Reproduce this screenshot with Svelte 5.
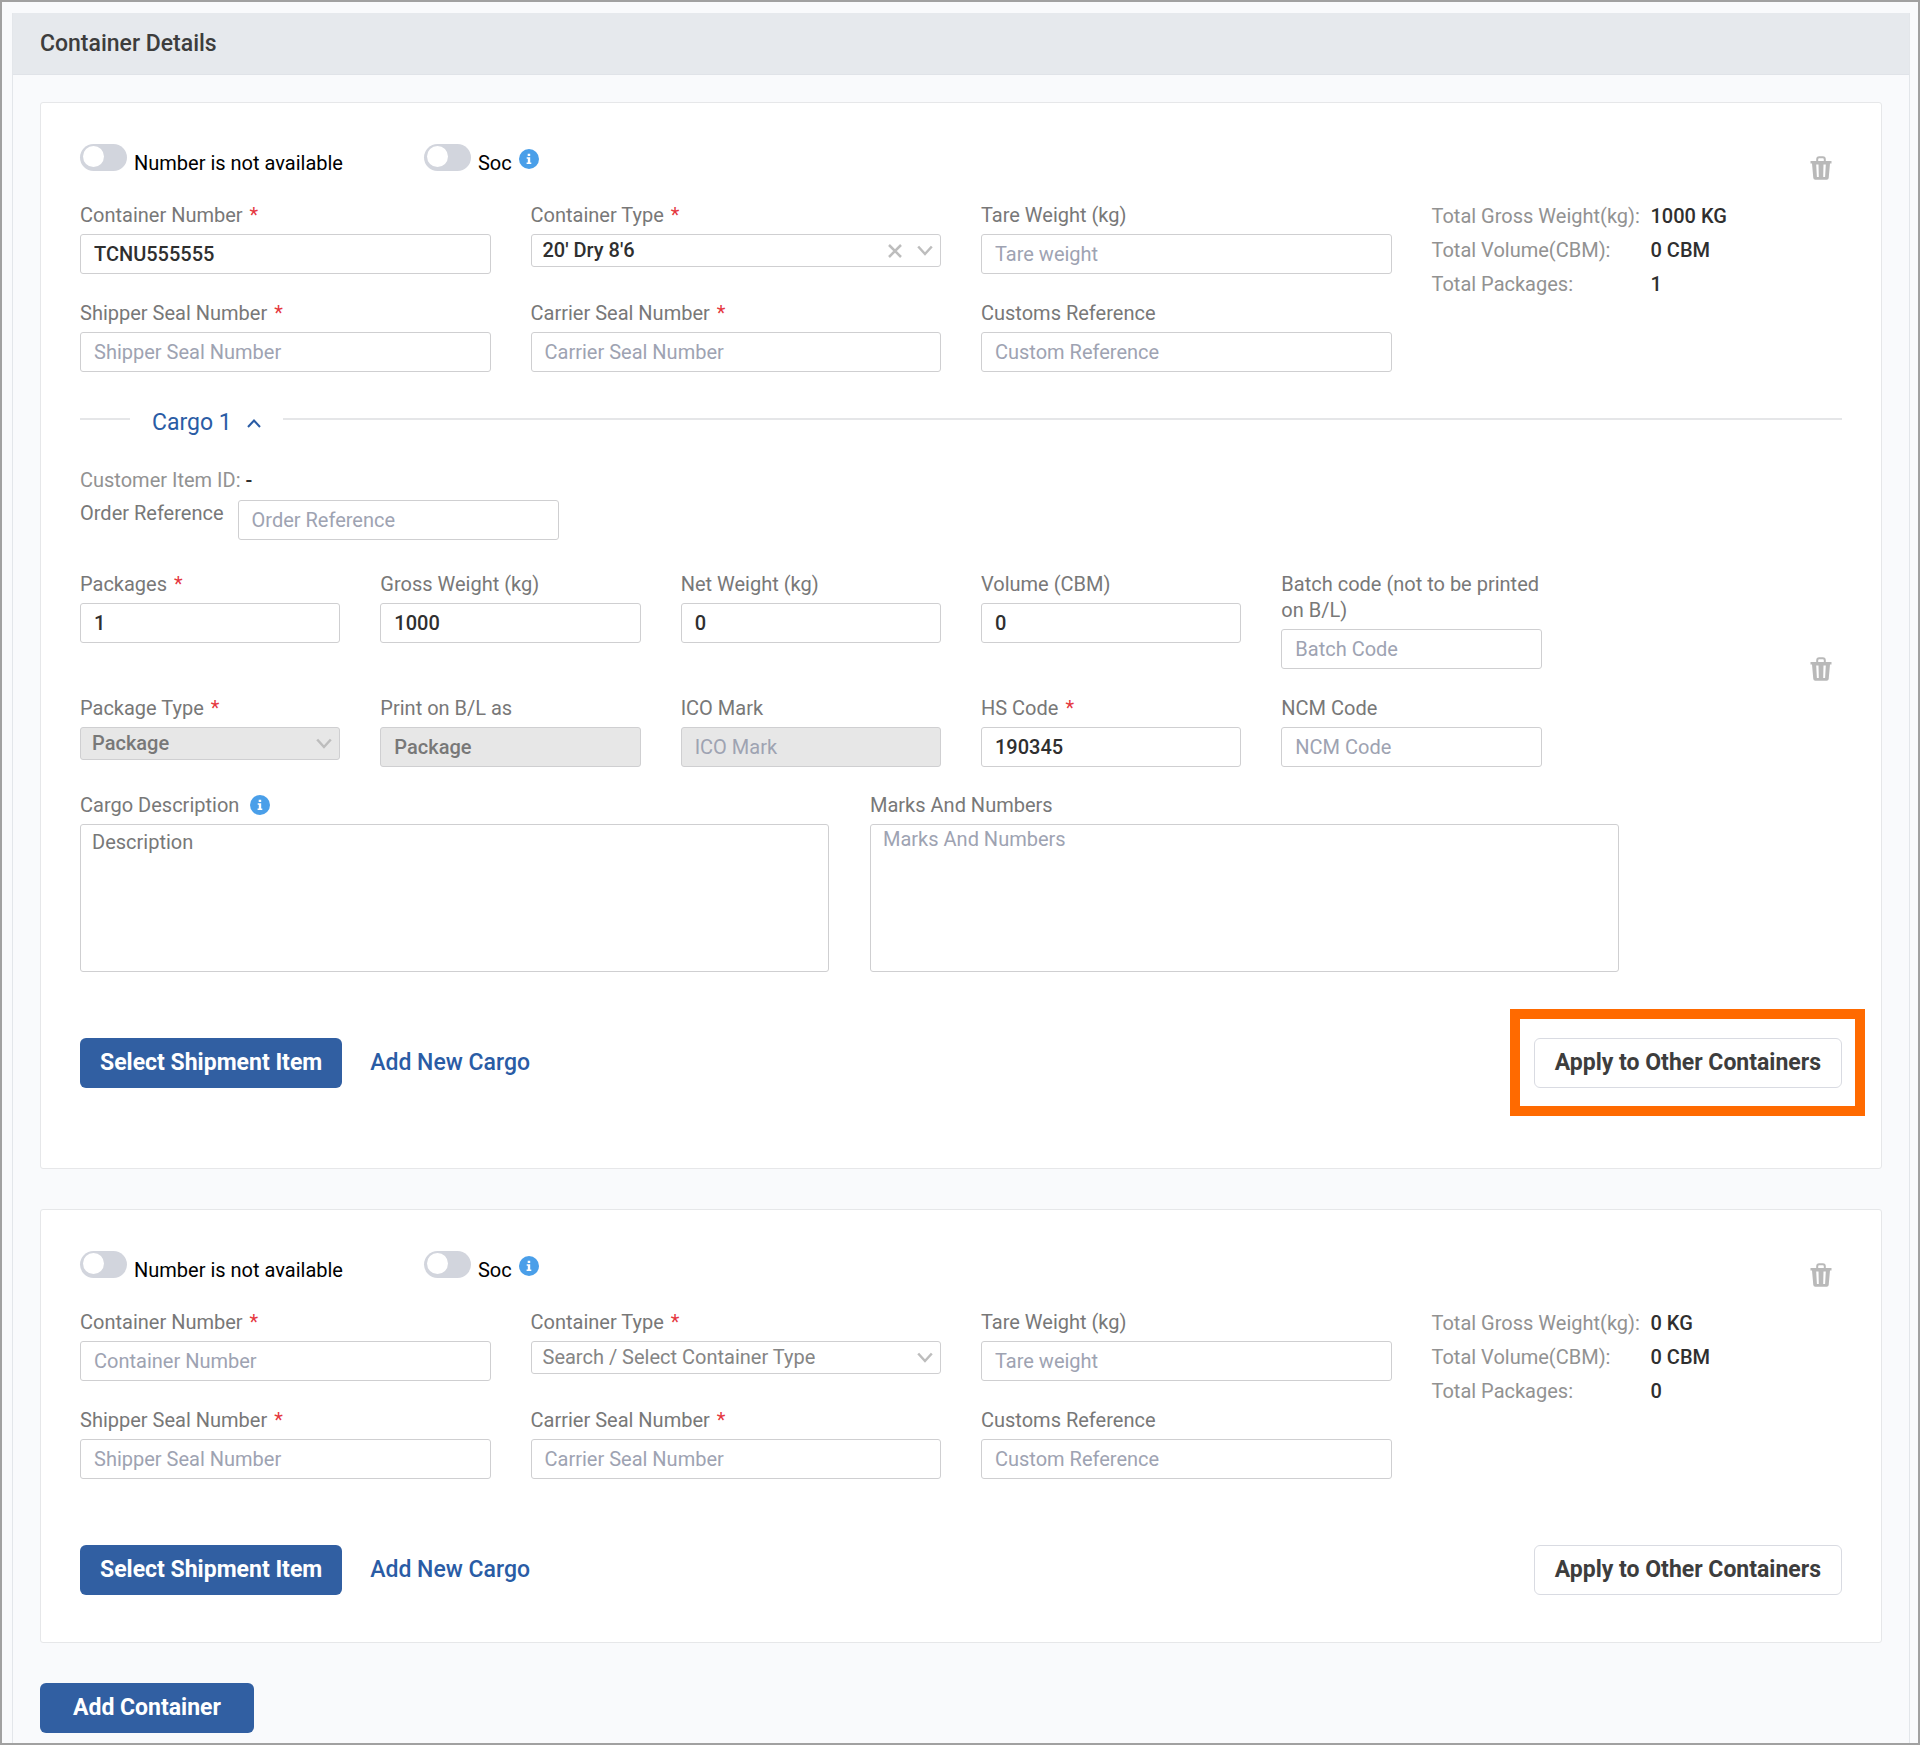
<script lang="ts">
	type Container = {
		id: number;
		number: string;
		type: string;
		totals: [string, string][];
		hasCargo: boolean;
		highlight: boolean;
	};

	let containers: Container[] = $state([
		{
			id: 1,
			number: "TCNU555555",
			type: "20dry",
			totals: [
				["Total Gross Weight(kg):", "1000 KG"],
				["Total Volume(CBM):", "0 CBM"],
				["Total Packages:", "1"],
			],
			hasCargo: true,
			highlight: true,
		},
		{
			id: 2,
			number: "",
			type: "",
			totals: [
				["Total Gross Weight(kg):", "0 KG"],
				["Total Volume(CBM):", "0 CBM"],
				["Total Packages:", "0"],
			],
			hasCargo: false,
			highlight: false,
		},
	]);

	let cargoOpen = $state(true);
</script>

{#snippet info()}
	<svg class="info" viewBox="0 0 20 20" aria-hidden="true">
		<circle cx="10" cy="10" r="10" fill="#4a9fe9" />
		<path d="M8.7 4.8h2.5v2.2H8.7zM7.7 8.2h3.5v5.3h1.1v1.6H7.6v-1.6h1.2V9.8H7.7z" fill="#fff" />
	</svg>
{/snippet}

{#snippet chevron()}
	<svg class="chevron" viewBox="0 0 16 11" aria-hidden="true">
		<path d="M1.2 1.5 8 9l6.8-7.5" fill="none" stroke="#bdbdbd" stroke-width="2.5" />
	</svg>
{/snippet}

{#snippet trash(label: string)}
	<button class="trash" type="button" aria-label={label}>
		<svg viewBox="0 0 22 24" aria-hidden="true">
			<path
				d="M7.2 6V3.2q0-2 2-2h3.6q2 0 2 2V6"
				fill="none"
				stroke="#b9b9b9"
				stroke-width="2"
			/>
			<path
				fill="#b9b9b9"
				fill-rule="evenodd"
				d="M.5 5h21v2.5H20L18.7 22q-.2 1.800-2 1.800H5.300q-1.800 0-2-1.800L2 7.500H.5zM6.200 8.500l.7 12.500h1.900L8.500 8.500zM13.500 8.500l-.3 12.500h1.900l.7-12.500z"
			/>
		</svg>
	</button>
{/snippet}

{#snippet field(id: string, label: string, placeholder: string, value = "", required = false, disabled = false)}
	<div class="field">
		<label for={id}>{label}{#if required}<span class="req">*</span>{/if}</label>
		<input {id} type="text" {placeholder} {value} {disabled} />
	</div>
{/snippet}

<main class="page">
	<section class="panel">
		<header class="panel-head">
			<h2>Container Details</h2>
		</header>
		<div class="panel-body">
			{#each containers as c (c.id)}
				<article class="card">
					<div class="toggles">
						<div class="toggle toggle-number">
							<input id="na-{c.id}" type="checkbox" role="switch" />
							<label for="na-{c.id}">Number is not available</label>
						</div>
						<div class="toggle">
							<input id="soc-{c.id}" type="checkbox" role="switch" />
							<label for="soc-{c.id}">Soc</label>
							{@render info()}
						</div>
						<div class="toggles-end">{@render trash("Delete container")}</div>
					</div>

					<div class="container-grid">
						{@render field(`number-${c.id}`, "Container Number", "Container Number", c.number, true)}
						<div class="field">
							<label for="type-{c.id}">Container Type<span class="req">*</span></label>
							<div class="select">
								<select id="type-{c.id}" class:empty={!c.type} bind:value={c.type}>
									<option value="">Search / Select Container Type</option>
									<option value="20dry">20' Dry 8'6</option>
								</select>
								{#if c.type}
									<button class="clear" type="button" aria-label="Clear" onclick={() => (c.type = "")}>
										<svg viewBox="0 0 14 14" aria-hidden="true">
											<path d="M1 1l12 12M13 1 1 13" stroke="#bdbdbd" stroke-width="2.5" />
										</svg>
									</button>
								{/if}
								{@render chevron()}
							</div>
						</div>
						{@render field(`tare-${c.id}`, "Tare Weight (kg)", "Tare weight")}
						<dl class="totals">
							{#each c.totals as [name, value]}
								<dt>{name}</dt>
								<dd>{value}</dd>
							{/each}
						</dl>
						{@render field(`shipper-${c.id}`, "Shipper Seal Number", "Shipper Seal Number", "", true)}
						{@render field(`carrier-${c.id}`, "Carrier Seal Number", "Carrier Seal Number", "", true)}
						{@render field(`customs-${c.id}`, "Customs Reference", "Custom Reference")}
					</div>

					{#if c.hasCargo}
						<div class="cargo">
							<div class="cargo-head">
								<button type="button" aria-expanded={cargoOpen} onclick={() => (cargoOpen = !cargoOpen)}>
									Cargo 1
									<svg class:closed={!cargoOpen} viewBox="0 0 14 9" aria-hidden="true">
										<path d="M1 8l6-6.500L13 8" fill="none" stroke="#2a5ca5" stroke-width="2" />
									</svg>
								</button>
							</div>

							{#if cargoOpen}
								<p class="item-id">Customer Item ID: <b>-</b></p>
								<div class="order-ref">
									<label for="order-ref">Order Reference</label>
									<input id="order-ref" type="text" placeholder="Order Reference" />
								</div>

								<div class="cargo-grid">
									{@render field("packages", "Packages", "Packages", "1", true)}
									{@render field("gross", "Gross Weight (kg)", "Gross Weight", "1000")}
									{@render field("net", "Net Weight (kg)", "Net Weight", "0")}
									{@render field("volume", "Volume (CBM)", "Volume", "0")}
									{@render field("batch", "Batch code (not to be printed on B/L)", "Batch Code")}
									<div class="cargo-delete">{@render trash("Delete cargo")}</div>
									<div class="field">
										<label for="package-type">Package Type<span class="req">*</span></label>
										<div class="select">
											<select id="package-type" disabled>
												<option>Package</option>
											</select>
											{@render chevron()}
										</div>
									</div>
									{@render field("print-as", "Print on B/L as", "", "Package", false, true)}
									{@render field("ico", "ICO Mark", "ICO Mark", "", false, true)}
									{@render field("hs", "HS Code", "HS Code", "190345", true)}
									{@render field("ncm", "NCM Code", "NCM Code")}
								</div>

								<div class="text-grid">
									<div class="field">
										<div class="label-row">
											<label for="description">Cargo Description</label>
											{@render info()}
										</div>
										<textarea id="description" class="description" placeholder="Description"></textarea>
									</div>
									<div class="field">
										<label for="marks">Marks And Numbers</label>
										<textarea id="marks" placeholder="Marks And Numbers"></textarea>
									</div>
								</div>
							{/if}
						</div>
					{/if}

					<footer class="actions" class:with-cargo={c.hasCargo}>
						<button class="btn primary" type="button">Select Shipment Item</button>
						<button class="btn link" type="button">Add New Cargo</button>
						<div class="apply" class:highlight={c.highlight}>
							<button class="btn outline" type="button">Apply to Other Containers</button>
						</div>
					</footer>
				</article>
			{/each}

			<button class="btn primary add" type="button">Add Container</button>
		</div>
	</section>
</main>

<style>
	:global(body) {
		margin: 0;
	}

	.page,
	.page * {
		box-sizing: border-box;
	}

	.page {
		display: flex;
		min-height: 100vh;
		padding: 11px 8px 0 10px;
		border: 2px solid #a1a1a1;
		background: #f9fafc;
		font-family: Roboto, "Liberation Sans", sans-serif;
		font-size: 20px;
		line-height: 26px;
		color: #787878;
	}

	button,
	input,
	select,
	textarea {
		font: inherit;
	}

	button {
		padding: 0;
		border: none;
		background: none;
		cursor: pointer;
	}

	.panel {
		flex: 1;
		min-width: 0;
		border: 1px solid #e3e6ea;
		border-width: 0 1px;
	}

	.panel-head {
		padding: 18px 27px 17px;
		border-bottom: 1px solid #e0e3e8;
		background: #e6e9ed;
	}

	h2 {
		margin: 0;
		font-size: 23px;
		font-weight: 500;
		color: #3d3d3d;
	}

	.panel-body {
		display: flex;
		flex-direction: column;
		align-items: stretch;
		gap: 40px;
		padding: 27px 27px 10px;
	}

	.card {
		padding: 41px 39px 47px;
		border: 1px solid #e6e7e9;
		border-radius: 3px;
		background: #fff;
	}

	.toggles {
		display: flex;
		height: 32px;
		margin-bottom: 26px;
	}

	.toggle {
		display: flex;
		align-items: flex-start;
		gap: 7px;
		color: #000;
	}

	.toggle label {
		margin-top: 6px;
	}

	.toggle-number {
		margin-right: 81px;
	}

	.toggle input {
		width: 47px;
		height: 27px;
		margin: 0;
		border-radius: 14px;
		background: #d2d5dd;
		appearance: none;
	}

	.toggle input::before {
		content: "";
		display: block;
		width: 21px;
		height: 21px;
		margin: 2px 3px;
		border-radius: 50%;
		background: #fff;
	}

	.toggle input:checked {
		background: #315fa2;
	}

	.toggle input:checked::before {
		margin-left: 23px;
	}

	.toggle .info {
		margin-top: 5px;
	}

	.info {
		width: 20px;
		height: 20px;
	}

	.toggles-end {
		margin: 12px 10px 0 auto;
	}

	.trash {
		display: block;
		width: 22px;
		height: 24px;
	}

	.trash svg {
		display: block;
	}

	.container-grid {
		display: grid;
		grid-template-columns: repeat(4, minmax(0, 1fr));
		gap: 26px 40px;
		align-items: start;
	}

	.field {
		display: flex;
		flex-direction: column;
		gap: 6px;
		min-width: 0;
	}

	.req {
		margin-left: 7px;
		color: #e5383f;
	}

	input[type="text"],
	textarea {
		width: 100%;
		border: 1px solid #cfcfd1;
		border-radius: 3px;
		background: #fff;
		color: #2f2f2f;
		font-weight: 500;
		outline: none;
	}

	input[type="text"] {
		height: 40px;
		padding: 0 13px;
	}

	input::placeholder,
	textarea::placeholder {
		color: #9ea3b2;
		font-weight: 400;
		opacity: 1;
	}

	input[type="text"]:disabled {
		background: #e7e7e7;
		color: #787878;
	}

	.select {
		position: relative;
	}

	select {
		display: block;
		width: 100%;
		height: 33px;
		padding: 0 60px 2px 11px;
		border: 1px solid #cfcfd1;
		border-radius: 3px;
		background: #fff;
		color: #2f2f2f;
		font-weight: 500;
		opacity: 1;
		appearance: none;
	}

	select.empty {
		font-weight: 400;
		color: #858585;
	}

	select:disabled {
		background: #e7e7e7;
		color: #787878;
		opacity: 1;
	}

	.chevron {
		position: absolute;
		top: 11px;
		right: 8px;
		width: 16px;
		height: 11px;
		pointer-events: none;
	}

	.clear {
		position: absolute;
		top: 10px;
		right: 39px;
		width: 14px;
		height: 14px;
	}

	.clear svg {
		display: block;
	}

	.totals {
		display: grid;
		grid-template-columns: 212px 1fr;
		grid-row: span 2;
		row-gap: 8px;
		margin: 1px 0 0;
	}

	.totals dt {
		color: #929292;
		white-space: nowrap;
	}

	.totals dd {
		margin: 0 0 0 7px;
		color: #2f2f2f;
		font-weight: 500;
	}

	.cargo-head {
		display: flex;
		align-items: center;
		gap: 22px;
		margin: 38px 0 31px;
	}

	.cargo-head::before,
	.cargo-head::after {
		content: "";
		flex: 0 0 50px;
		height: 2px;
		margin-bottom: 9px;
		background: #e5e6e8;
	}

	.cargo-head::after {
		flex: 1;
	}

	.cargo-head button {
		display: flex;
		align-items: center;
		gap: 15px;
		font-size: 23px;
		color: #2a5ca5;
	}

	.cargo-head svg {
		width: 14px;
		height: 9px;
	}

	.cargo-head svg.closed {
		transform: rotate(180deg);
	}

	.item-id {
		margin: 0 0 7px;
		color: #929292;
	}

	.item-id b {
		color: #2f2f2f;
		font-weight: 500;
	}

	.order-ref {
		display: flex;
		gap: 14px;
		margin-bottom: 31px;
	}

	.order-ref input[type="text"] {
		width: 321px;
	}

	.cargo-grid {
		display: grid;
		grid-template-columns: repeat(6, minmax(0, 1fr));
		gap: 26px 40px;
		align-items: start;
	}

	.cargo-delete {
		grid-column: 6;
		grid-row: 1 / span 2;
		align-self: center;
		justify-self: end;
		margin-right: 10px;
	}

	.text-grid {
		display: grid;
		grid-template-columns: repeat(2, minmax(0, 749px));
		gap: 41px;
		margin-top: 25px;
	}

	.label-row {
		display: flex;
		align-items: center;
		gap: 11px;
	}

	textarea {
		display: block;
		height: 148px;
		padding: 1px 12px;
		resize: none;
	}

	textarea.description {
		padding: 4px 11px;
	}

	.description::placeholder {
		color: #787878;
	}

	.actions {
		display: flex;
		align-items: center;
		margin-top: 66px;
	}

	.actions.with-cargo {
		margin-bottom: 33px;
	}

	.btn {
		height: 50px;
		border-radius: 6px;
		font-size: 23px;
		font-weight: 500;
		white-space: nowrap;
	}

	.primary {
		padding: 0 20px;
		background: #315fa2;
		color: #fff;
		font-weight: 700;
	}

	.link {
		margin-left: 28px;
		color: #2a5ca5;
	}

	.outline {
		padding: 0 20px;
		border: 1px solid #d9dbe2;
		background: #fff;
		color: #3d3d3d;
		font-weight: 700;
	}

	.apply {
		position: relative;
		margin-left: auto;
	}

	.highlight::after {
		content: "";
		position: absolute;
		inset: -29px -23px -28px -24px;
		border: 10px solid #ff6a00;
		pointer-events: none;
	}

	.add {
		align-self: flex-start;
		padding: 0 33px;
	}
</style>
